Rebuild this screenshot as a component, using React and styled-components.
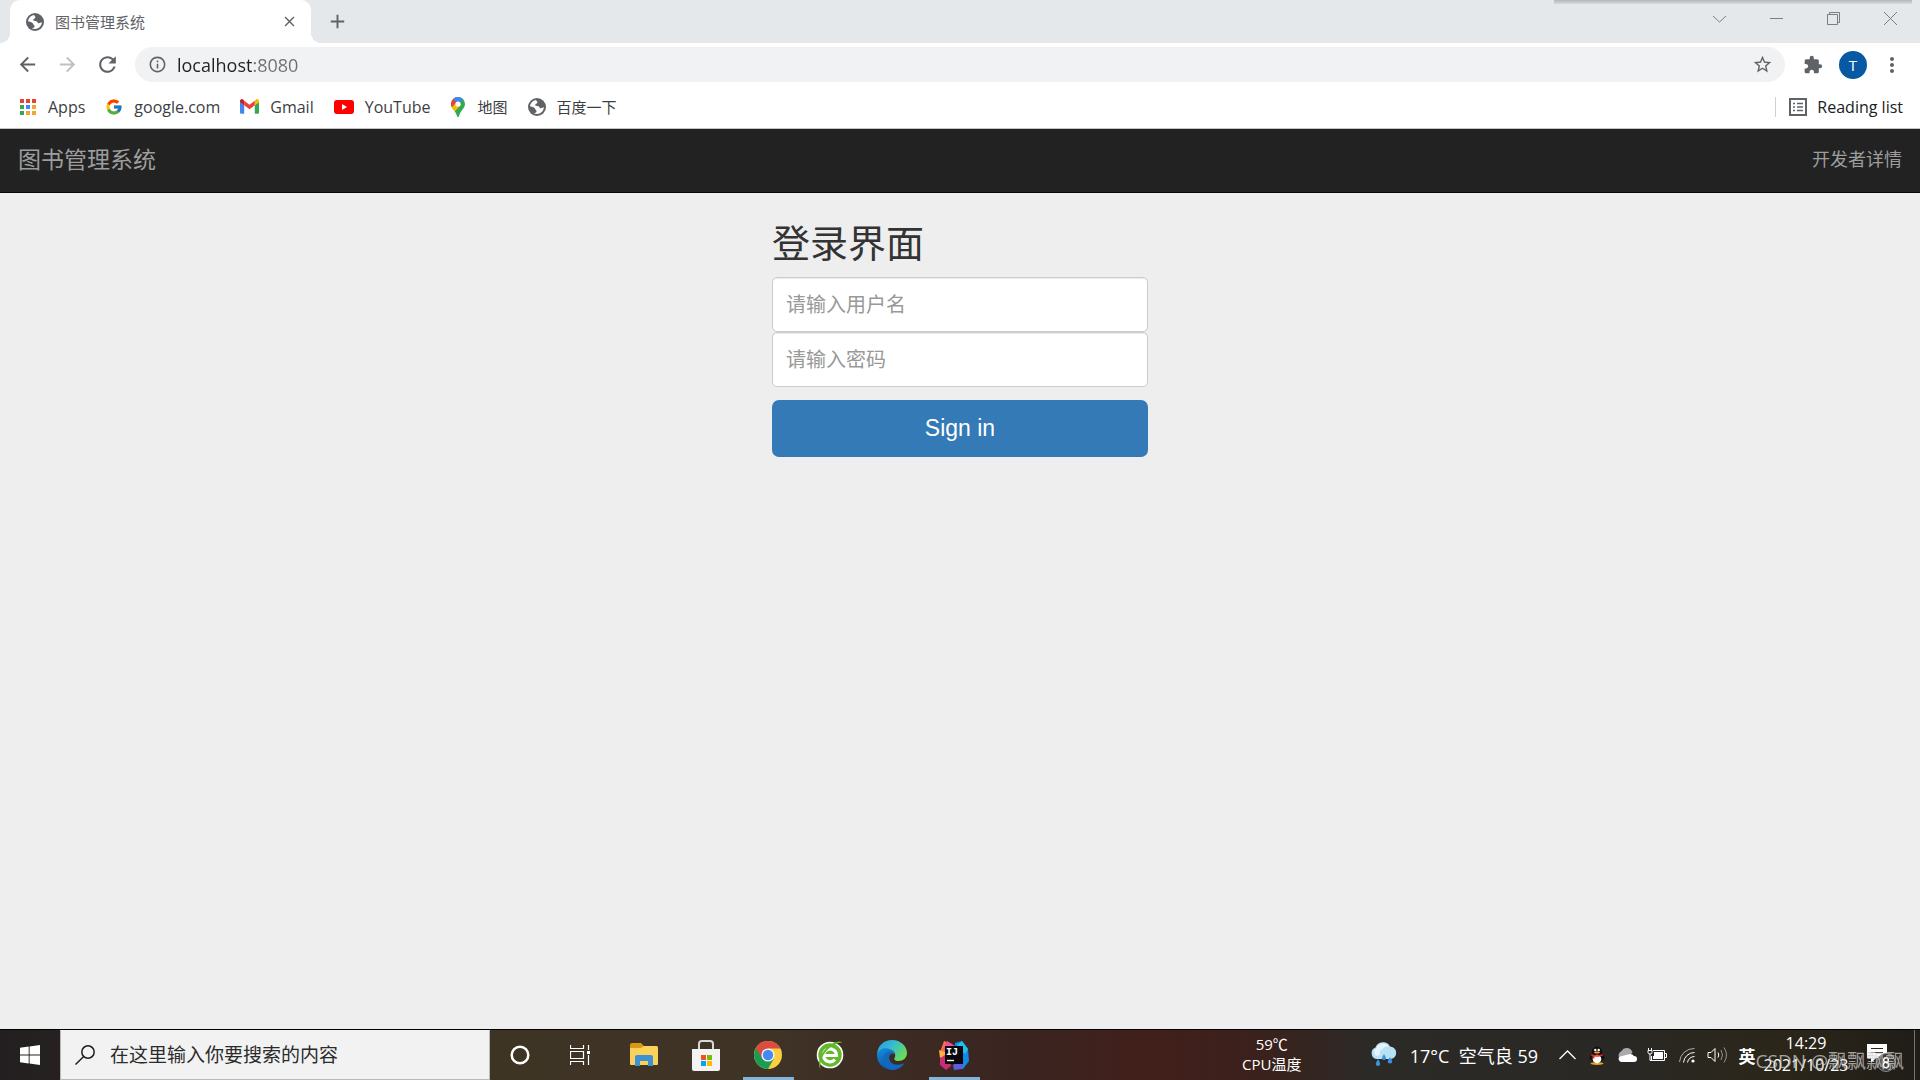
import React from "react"
import styled, { createGlobalStyle } from "styled-components"
import { MdArrowBack, MdArrowForward, MdRefresh, MdInfoOutline, MdStarBorder, MdExtension, MdMoreVert, MdClose, MdAdd } from 'react-icons/md';
import { FcGoogle } from 'react-icons/fc';


const GlobalStyle = createGlobalStyle`
	* {
		box-sizing: border-box;
	}

	body {
		margin: 0;
		background: #eeeeee;
		font-family: "Open Sans", "Noto Sans CJK SC", sans-serif;
	}

	button, input {
		font-family: inherit;
		margin: 0;
	}

	button {
		border: 0;
		padding: 0;
		background: none;
		cursor: pointer;
	}

	a {
		text-decoration: none;
	}

	svg {
		display: block;
		flex: none;
	}
`

const Screen = styled.div`
	display: flex;
	flex-direction: column;
	min-height: 100vh;
`

/* browser window */

const TabStrip = styled.div`
	position: relative;
	display: flex;
	align-items: stretch;
	height: 43px;
	padding-left: 10px;
	background: #e5e8eb;
`

const PopupShadow = styled.div`
	position: absolute;
	top: 0;
	right: 8px;
	width: 358px;
	height: 4px;
	background: linear-gradient(#b4b7b9, #d8dbde);
`

const Tab = styled.div`
	position: relative;
	display: flex;
	align-items: center;
	width: 301px;
	padding: 0 12px 0 16px;
	border-radius: 10px 10px 0 0;
	background: #fff;

	&::before, &::after {
		content: "";
		position: absolute;
		bottom: 0;
		width: 10px;
		height: 10px;
	}

	&::before {
		right: 100%;
		background: radial-gradient(circle at 0 0, transparent 10px, #fff 10px);
	}

	&::after {
		left: 100%;
		background: radial-gradient(circle at 100% 0, transparent 10px, #fff 10px);
	}
`

const TabTitle = styled.span`
	flex: 1;
	margin-left: 11px;
	font-size: 15px;
	line-height: 20px;
	color: #5f6368;
`

const IconButton = styled.button`
	display: flex;
	align-items: center;
	justify-content: center;
	width: ${p => p.$w || 40}px;
	height: ${p => p.$h || 40}px;
	color: ${p => p.$faded ? '#bdc0c4' : '#5f6368'};
`

const WindowButtons = styled.div`
	display: flex;
	margin-left: auto;
	padding-right: 1px;
`

const Toolbar = styled.div`
	display: flex;
	align-items: center;
	height: 43px;
	padding: 0 8px 0 7px;
	background: #fff;
`

const Omnibox = styled.div`
	flex: 1;
	display: flex;
	align-items: center;
	height: 35px;
	margin: 0 8px;
	padding: 0 12px 0 13px;
	border-radius: 18px;
	background: #f0f2f4;
	color: #5f6368;
`

/* the port is drawn lighter than the host */
const Address = styled.input`
	flex: 1;
	border: 0;
	outline: 0;
	padding: 0;
	margin-left: 10px;
	font-size: 18px;
	line-height: 24px;
	color: transparent;
	background: linear-gradient(90deg, #202124 77px, #6b6f74 77px);
	-webkit-background-clip: text;
	background-clip: text;
`

const Avatar = styled.button`
	width: 28px;
	height: 28px;
	margin: 0 5px 0 6px;
	border-radius: 50%;
	background: #0759a3;
	color: #fff;
	font-size: 15px;
	line-height: 28px;
`

const Bookmarks = styled.nav`
	display: flex;
	align-items: center;
	gap: 20px;
	height: 43px;
	padding: 0 17px 1px 19px;
	border-bottom: 1px solid #c4c4c4;
	background: #fff;
`

const Bookmark = styled.a`
	display: flex;
	align-items: center;
	gap: 11px;
	font-size: ${p => p.$cjk ? 15 : 16}px;
	line-height: 20px;
	color: #3c4043;
`

const ReadingList = styled.button`
	display: flex;
	align-items: center;
	gap: 10px;
	height: 20px;
	margin-left: auto;
	padding-left: 13px;
	border-left: 1px solid #cdd0d4;
	font-size: 16px;
	line-height: 20px;
	color: #202124;
`

/* login page */

const Navbar = styled.header`
	display: flex;
	align-items: center;
	justify-content: space-between;
	height: 64px;
	padding: 0 18px 3px;
	border-bottom: 1px solid #080808;
	background: #222;
`

const NavLink = styled.a`
	font-size: ${p => p.$brand ? 23 : 18}px;
	line-height: 28px;
	color: #9d9d9d;
`

const Page = styled.main`
	flex: 1;
	background: #eeeeee;
`

const LoginForm = styled.form`
	width: 376px;
	margin: 0 auto;
	padding-top: 28px;
`

const Heading = styled.h2`
	margin: 0 0 14px;
	font-size: 38px;
	line-height: 42px;
	font-weight: 400;
	color: #333;
`

const Field = styled.input`
	display: block;
	width: 100%;
	height: 55px;
	padding: 0 13px;
	border: 1px solid #ccc;
	border-radius: 5px;
	background: #fff;
	box-shadow: inset 0 1px 1px rgba(0, 0, 0, .08);
	font-size: 20px;

	&::placeholder {
		color: #999;
	}
`

const SignIn = styled.button`
	width: 100%;
	height: 57px;
	margin-top: 13px;
	border-radius: 7px;
	background: #337ab7;
	color: #fff;
	font-family: "Liberation Sans", Arial, sans-serif;
	font-size: 23px;
`

/* windows taskbar */

const Taskbar = styled.footer`
	position: relative;
	display: flex;
	height: 51px;
	border-top: 1px solid #000;
	background: linear-gradient(90deg, #231f20 0, #3e3424 26%, #3f3326 40%, #3a2420 53%, #421f1b 60%, #3a211c 66%, #2c2a27 71%, #2a2824 85%, #2b2619 93%, #201d19 100%);
	color: #fff;
`

const TaskButton = styled.button`
	display: flex;
	align-items: center;
	justify-content: center;
	width: ${p => p.$w || 62}px;
	color: #fff;
	background: ${p => p.$open ? 'linear-gradient(#83b4dc, #83b4dc) center bottom / 51px 3px no-repeat' : 'none'};
`

const SearchBox = styled.label`
	display: flex;
	align-items: center;
	gap: 15px;
	width: 430px;
	padding-left: 14px;
	border: 1px solid #b9b9b9;
	border-top-color: #f2f2f2;
	background: #f2f2f2;
`

const SearchInput = styled.input`
	flex: 1;
	min-width: 0;
	border: 0;
	padding: 0;
	outline: 0;
	background: none;
	font-size: 19px;

	&::placeholder {
		color: #2b2b2b;
	}
`

const Apps = styled.div`
	display: flex;
	padding-left: 3px;
`

const Readout = styled.div`
	display: flex;
	flex-direction: column;
	justify-content: center;
	width: ${p => p.$w}px;
	padding-bottom: 2px;
	text-align: center;
	font-size: ${p => p.$clock ? 16 : 15}px;
	line-height: ${p => p.$clock ? 22 : 20}px;
`

const SystemTray = styled.div`
	display: flex;
	margin-left: auto;
`

const Weather = styled.button`
	display: flex;
	align-items: center;
	gap: 13px;
	margin: 0 14px 0 63px;
	color: #fff;
	font-size: 18px;
	white-space: pre;
`

const Language = styled.span`
	font-size: 17px;
	font-weight: 700;
`

const ShowDesktop = styled.button`
	width: 6px;
	margin-left: 2px;
	border-left: 1px solid #77756d;
`

const Watermark = styled.div`
	position: absolute;
	right: 16px;
	bottom: 5px;
	font-size: 19px;
	line-height: 28px;
	color: rgba(205, 205, 205, .75);
	pointer-events: none;
`


function Globe(){
	return (
		<svg width="18" height="18" viewBox="0 0 18 18">
			<circle cx="9" cy="9" r="9" fill="#5f6368"/>
			<path d="M2 8.2C2.400 5 5 2.300 8.200 2 8 3.200 9.800 3.400 9.400 4.800 9.100 5.800 7.300 5.500 7.200 7c-.1 1 2.600.7 3.600 1.400C12 9.200 11.500 10.500 13 10.300c1-.1 1.600-.9 2.900-1C15.700 13 12.800 15.900 9 16c-1.200 0-2.300-.3-3.300-.8.900-.5 2.900-.3 2.900-1.700 0-1.100-1-1.500-1.400-2.500C6.700 9.500 4.600 8.600 2 8.200z" fill="#fff"/>
		</svg>
	)
}

function AppsGrid(){
	const dots = ['#e94335', '#e94335', '#e94335', '#34a853', '#4285f4', '#f0a72f', '#34a853', '#f0a72f', '#f0a72f']
	return (
		<svg width="18" height="18" viewBox="0 0 18 18">
			{dots.map((color, i) => (
				<rect key={i} x={1 + (i % 3) * 6} y={1 + Math.floor(i / 3) * 6} width="4" height="4" fill={color}/>
			))}
		</svg>
	)
}

function GmailIcon(){
	return (
		<svg width="19" height="15" viewBox="0 0 19 15">
			<path d="M0 3v10.500c0 .8.500 1.200 1.200 1.200h3V6z" fill="#4285f4"/>
			<path d="M19 3v10.500c0 .8-.5 1.200-1.200 1.200h-3V6z" fill="#34a853"/>
			<path d="M14.800 1.800V6.300L19 3.200V2c0-1.700-1.800-2.500-3-1.500z" fill="#fbbc04"/>
			<path d="M4.200 6.300V1.800l5.300 4 5.300-4v4.500l-5.300 4z" fill="#ea4335"/>
			<path d="M0 2v1.200l4.200 3.100V1.800L3 .5C1.800-.5 0 .3 0 2z" fill="#c5221f"/>
		</svg>
	)
}

function YoutubeIcon(){
	return (
		<svg width="20" height="14" viewBox="0 0 20 14">
			<rect width="20" height="14" rx="3" fill="#f00"/>
			<path d="M8 4v6l5-3z" fill="#fff"/>
		</svg>
	)
}

function MapPin(){
	return (
		<svg width="16" height="20" viewBox="0 0 16 20">
			<defs>
				<clipPath id="pin"><path d="M8 0a7 7 0 0 1 7 7c0 4.500-4.500 6.500-5.800 11.500C9 19.300 8.600 20 8 20s-1-.7-1.200-1.500C5.500 13.500 1 11.500 1 7a7 7 0 0 1 7-7z"/></clipPath>
			</defs>
			<g clipPath="url(#pin)">
				<path d="M0 0h16v20H0z" fill="#34a853"/>
				<path d="M0 0h6l2 7-4.500 5L0 8z" fill="#ea4335"/>
				<path d="M0 12L8 4l3 3.500L3.500 16z" fill="#fbbc04"/>
				<path d="M3 2L8 7l6.500-6L10-1H5z" fill="#4285f4"/>
			</g>
			<circle cx="8" cy="7" r="2.600" fill="#fff"/>
		</svg>
	)
}

function ReadingIcon(){
	return (
		<svg width="18" height="18" viewBox="0 0 18 18" fill="none" stroke="#5f6368">
			<rect x="1" y="1" width="16" height="16" strokeWidth="2"/>
			<path d="M4 5.500h2M4 9h2M4 12.500h2M8 5.500h6M8 9h6M8 12.500h6" strokeWidth="1.500"/>
		</svg>
	)
}

function WindowIcon({ d }){
	return (
		<svg width="15" height="15" viewBox="0 0 15 15" fill="none" stroke="#7b7e80">
			<path d={d}/>
		</svg>
	)
}

function WindowsLogo(){
	return (
		<svg width="20" height="20" viewBox="0 0 20 20" fill="#fff">
			<path d="M0 2.800L8.700 1.600V9.600H0zM9.600 1.500L20 0V9.600H9.600zM0 10.400H8.700V18.400L0 17.200zM9.600 10.400H20V20L9.600 18.500z"/>
		</svg>
	)
}

function SearchIcon(){
	return (
		<svg width="20" height="20" viewBox="0 0 20 20" fill="none" stroke="#1e1e1e" strokeWidth="1.500">
			<circle cx="13" cy="7" r="6.200"/>
			<path d="M8.700 11.500L.5 19.500"/>
		</svg>
	)
}

function CortanaIcon(){
	return (
		<svg width="20" height="20" viewBox="0 0 20 20" fill="none">
			<circle cx="10" cy="10" r="8.300" stroke="#fff" strokeWidth="2.500"/>
		</svg>
	)
}

function TaskViewIcon(){
	return (
		<svg width="21" height="20" viewBox="0 0 21 20" fill="none" stroke="#fff">
			<path d="M.5 0V3.500H13.500V0M.5 20V16.500H13.500V20M.5 6.500H13.500V13.500H.5zM18.500 0V5M18.500 10V20" strokeWidth="1.200"/>
			<rect x="17" y="6" width="3" height="3" fill="#fff" stroke="none"/>
		</svg>
	)
}

function ExplorerIcon(){
	return (
		<svg width="28" height="24" viewBox="0 0 28 24">
			<path d="M0 2q0-2 2-2h9l3 3h12q2 0 2 2v16H0z" fill="#d99a12"/>
			<path d="M0 5h11l3-2h12q2 0 2 2v16q0 1-1 1H1q-1 0-1-1z" fill="#fbd15b"/>
			<path d="M5 23V14q0-2 2-2h14q2 0 2 2v9h-5v-5h-8v5z" fill="#3b91d1"/>
		</svg>
	)
}

function StoreIcon(){
	return (
		<svg width="30" height="31" viewBox="0 0 30 31">
			<path d="M8 10V4q0-3 3-3h8q3 0 3 3v6" fill="none" stroke="#d8d8d8" strokeWidth="2"/>
			<path d="M1 9h28v20q0 2-2 2H3q-2 0-2-2z" fill="#f3f3f3"/>
			<path d="M10 15h5v5h-5z" fill="#f25022"/>
			<path d="M16 15h5v5h-5z" fill="#7fba00"/>
			<path d="M10 21h5v5h-5z" fill="#00a4ef"/>
			<path d="M16 21h5v5h-5z" fill="#ffb900"/>
		</svg>
	)
}

function ChromeIcon(){
	return (
		<svg width="28" height="28" viewBox="0 0 28 28">
			<circle cx="14" cy="14" r="14" fill="#ffcd40"/>
			<path d="M14 14L1.900 7A14 14 0 0 0 14 28l6-10.500z" fill="#1a9c53"/>
			<path d="M14 7.500H26.400A14 14 0 0 0 1.900 7L8.300 17.500z" fill="#dd4b3e"/>
			<circle cx="14" cy="14" r="6.600" fill="#f4f4f4"/>
			<circle cx="14" cy="14" r="5.200" fill="#4688f1"/>
		</svg>
	)
}

function Browser360Icon(){
	return (
		<svg width="28" height="30" viewBox="0 0 28 30">
			<circle cx="14" cy="15" r="12.500" fill="#62b82a" stroke="#fff" strokeWidth="1.600"/>
			<path d="M8 15.500H20.500A6.500 6.500 0 1 0 19 19.500" fill="none" stroke="#fff" strokeWidth="3.200"/>
			<path d="M4.500 29C1.500 25 3 17 8.500 10 14 3 24-1 26.500 3 23 1.500 15 5 9.500 12 5.500 17 3.500 24 4.500 29z" fill="#62b82a"/>
		</svg>
	)
}

function EdgeIcon(){
	return (
		<svg width="30" height="30" viewBox="0 0 30 30">
			<defs>
				<linearGradient id="edgeTop" x1="0" y1="0" x2="1" y2="0.600">
					<stop offset="0" stopColor="#2797dd"/>
					<stop offset=".5" stopColor="#36bdcf"/>
					<stop offset="1" stopColor="#6bdc55"/>
				</linearGradient>
				<linearGradient id="edgeSide" x1="0" y1="0" x2="0.600" y2="1">
					<stop offset="0" stopColor="#168ee0"/>
					<stop offset="1" stopColor="#0b4f9c"/>
				</linearGradient>
			</defs>
			<path d="M0 14C1 5 7 0 15 0c9 0 15 6.500 15 13 0 5-4 8-8.500 8-3.500 0-5-1.500-4-3 2-3 0-8-5-8C7 9.500 1 12 0 14z" fill="url(#edgeTop)"/>
			<path d="M0 14c2-5 7-6.500 11-5.500 5 1 6.500 4 6 6-2-2-5-.5-5 3C12 23 18 27 27 23.500 24.500 27.500 20 30 15 30 6 30-.5 22.500 0 14z" fill="url(#edgeSide)"/>
			<path d="M10 12c-7 5-4 16 5 18 5 0 9.500-2.500 12-6.500C18 27 12 23 12 17.500c0-1.500.5-2.500 1.500-3.300C15 13 14 11 10 12z" fill="#1368bd"/>
		</svg>
	)
}

const IdeaText = styled.text`
	font: bold 10px "Liberation Mono", monospace;
	fill: #fff;
`

function IdeaIcon(){
	return (
		<svg width="30" height="30" viewBox="0 0 30 30">
			<path d="M1 12L5 1l8 3-3 22-7-4z" fill="#fb7043"/>
			<path d="M8 1l8 5-8 8-4-5z" fill="#f54b91"/>
			<path d="M1 18l8-4 3 12-5 4-6-5z" fill="#c92d76"/>
			<path d="M0 10l8 3-7 5z" fill="#ffb13d"/>
			<path d="M16 3l7-2 6 8 1 12-6 8-9-3z" fill="#128ae5"/>
			<path d="M23 1l6 8-3 5-8-9z" fill="#21bfee"/>
			<path d="M14 25l11-5-2 9-8 1z" fill="#5d5ce3"/>
			<rect x="6" y="6" width="18" height="18" fill="#08080c"/>
			<IdeaText x="7" y="15">IJ</IdeaText>
			<path d="M8 20.500h7" stroke="#fff" strokeWidth="1.400"/>
		</svg>
	)
}

function RainIcon(){
	return (
		<svg width="27" height="26" viewBox="0 0 27 26">
			<path d="M6.500 17a6 6 0 0 1-1-11.500A8 8 0 0 1 20 4.500a6.300 6.300 0 0 1 1 12.500z" fill="#b9e1f6"/>
			<path d="M6.500 14a4.500 4.500 0 0 1 0-8A7 7 0 0 1 19 5c-3-1-5 0-6 2-3 0-4 3-3 6z" fill="#e3f5fc"/>
			<path d="M14 12q4 6 0 6t0-6zM8 17q4.500 7 0 7t0-7zM20 15q4.500 6.500 0 6.500t0-6.500z" fill="#3f90de"/>
		</svg>
	)
}

function QQIcon(){
	return (
		<svg width="16" height="19" viewBox="0 0 16 19">
			<ellipse cx="8" cy="17.500" rx="6.500" ry="1.500" fill="#f0a020"/>
			<path d="M3 6a5 5.500 0 0 1 10 0c0 2 3 4 2.500 7-.5 1.500-1.500 0-1.500 0-1 5-11 5-12 0 0 0-1 1.500-1.500 0C0 10 3 8 3 6z" fill="#111"/>
			<ellipse cx="8" cy="13" rx="4.300" ry="4.300" fill="#fff"/>
			<path d="M2.500 8q5.500 2.500 11 0l.5 1.500q-6 2.500-12 0z" fill="#e22a2f"/>
			<path d="M3.500 9.500h2v3h-2z" fill="#e22a2f"/>
			<circle cx="6.300" cy="4" r="1.200" fill="#fff"/>
			<circle cx="9.700" cy="4" r="1.200" fill="#fff"/>
			<ellipse cx="8" cy="6.500" rx="3" ry="1" fill="#f5a623"/>
		</svg>
	)
}

function CloudIcon(){
	return (
		<svg width="20" height="14" viewBox="0 0 20 14">
			<path d="M3 11A5 5 0 0 1 4.500 3a6 6 0 0 1 11 1.500L8 12z" fill="#a9a9a9"/>
			<path d="M4 14a3 3 0 0 1-1-5.500L11 6.500a5 5 0 0 1 6 1.500 3 3 0 0 1 0 6z" fill="#fff"/>
		</svg>
	)
}

function BatteryIcon(){
	return (
		<svg width="20" height="14" viewBox="0 0 20 14" fill="none" stroke="#fff">
			<path d="M6 2.500H17.500V12.500H4.500V8M17.500 5.500H19.500V9.500H17.500"/>
			<path d="M7 4h9v7H6V8h1z" fill="#fff" stroke="none"/>
			<path d="M1 2.500H5V4.500Q5 6 3 6T1 4.500zM1.500 0V2M4.500 0V2M3 6V12.500H5"/>
		</svg>
	)
}

function WifiIcon(){
	return (
		<svg width="16" height="16" viewBox="0 0 16 16" fill="none" stroke="#fff">
			<path d="M.5 15A14.500 14.500 0 0 1 15.500 1.500" opacity=".6"/>
			<path d="M4.500 15.500A11 11 0 0 1 15.500 5.500M8.500 15.500A7 7 0 0 1 15.500 9.500"/>
			<circle cx="14" cy="14" r="1.600" fill="#fff" stroke="none"/>
		</svg>
	)
}

function SpeakerIcon(){
	return (
		<svg width="21" height="18" viewBox="0 0 21 18" fill="none" stroke="#fff">
			<path d="M1 6.500H4L8 2.500V15.500L4 11.500H1z"/>
			<path d="M11 6.500Q12.500 9 11 11.500"/>
			<path d="M14 4Q17 9 14 14M17 1.500Q22 9 17 16.500" opacity=".5"/>
		</svg>
	)
}

function NotificationIcon(){
	return (
		<svg width="30" height="34" viewBox="0 0 30 34">
			<path d="M1 6H21V20H10L5 25V20H1z" fill="#fff"/>
			<path d="M5 10.500H17M5 14.500H17" stroke="#2b2619"/>
			<circle cx="20" cy="24.500" r="9" fill="#3b3a36" stroke="#8b8a85"/>
			<circle cx="20" cy="22" r="2.300" fill="none" stroke="#fff" strokeWidth="1.500"/>
			<circle cx="20" cy="27" r="2.700" fill="none" stroke="#fff" strokeWidth="1.500"/>
		</svg>
	)
}


function Browser(){
	return (
		<div>
			<TabStrip>
				<PopupShadow/>
				<Tab>
					<Globe/>
					<TabTitle>图书管理系统</TabTitle>
					<IconButton $w={20} aria-label="Close tab"><MdClose size={17}/></IconButton>
				</Tab>
				<IconButton $w={52} $h={43} aria-label="New tab"><MdAdd size={23}/></IconButton>
				<WindowButtons>
					<IconButton $w={57} $h={37} aria-label="Search tabs"><WindowIcon d="M1 5L7.500 11L14 5"/></IconButton>
					<IconButton $w={57} $h={37} aria-label="Minimize"><WindowIcon d="M1 7.500H14"/></IconButton>
					<IconButton $w={57} $h={37} aria-label="Restore"><WindowIcon d="M1.500 3.500H11.500V13.500H1.500zM3.500 3V1.500H13.500V11.500H12"/></IconButton>
					<IconButton $w={57} $h={37} aria-label="Close"><WindowIcon d="M1 1L14 14M14 1L1 14"/></IconButton>
				</WindowButtons>
			</TabStrip>
			<Toolbar>
				<IconButton aria-label="Back"><MdArrowBack size={23}/></IconButton>
				<IconButton $faded aria-label="Forward"><MdArrowForward size={23}/></IconButton>
				<IconButton aria-label="Reload"><MdRefresh size={25}/></IconButton>
				<Omnibox>
					<MdInfoOutline size={19}/>
					<Address aria-label="Address" defaultValue="localhost:8080"/>
					<MdStarBorder size={21}/>
				</Omnibox>
				<IconButton aria-label="Extensions"><MdExtension size={20}/></IconButton>
				<Avatar>T</Avatar>
				<IconButton aria-label="Menu"><MdMoreVert size={24}/></IconButton>
			</Toolbar>
			<Bookmarks>
				<Bookmark href="#"><AppsGrid/>Apps</Bookmark>
				<Bookmark href="#"><FcGoogle size={18}/>google.com</Bookmark>
				<Bookmark href="#"><GmailIcon/>Gmail</Bookmark>
				<Bookmark href="#"><YoutubeIcon/>YouTube</Bookmark>
				<Bookmark href="#" $cjk><MapPin/>地图</Bookmark>
				<Bookmark href="#" $cjk><Globe/>百度一下</Bookmark>
				<ReadingList><ReadingIcon/>Reading list</ReadingList>
			</Bookmarks>
		</div>
	)
}

function Login(){
	return (
		<Page>
			<Navbar>
				<NavLink href="#" $brand>图书管理系统</NavLink>
				<NavLink href="#">开发者详情</NavLink>
			</Navbar>
			<LoginForm onSubmit={e => e.preventDefault()}>
				<Heading>登录界面</Heading>
				<Field type="text" aria-label="请输入用户名" placeholder="请输入用户名"/>
				<Field type="password" aria-label="请输入密码" placeholder="请输入密码"/>
				<SignIn type="submit">Sign in</SignIn>
			</LoginForm>
		</Page>
	)
}

function WindowsTaskbar(){
	return (
		<Taskbar>
			<TaskButton $w={60} aria-label="Start"><WindowsLogo/></TaskButton>
			<SearchBox>
				<SearchIcon/>
				<SearchInput aria-label="在这里输入你要搜索的内容" placeholder="在这里输入你要搜索的内容"/>
			</SearchBox>
			<TaskButton $w={60} aria-label="Cortana"><CortanaIcon/></TaskButton>
			<TaskButton $w={60} aria-label="Task view"><TaskViewIcon/></TaskButton>
			<Apps>
				<TaskButton aria-label="Explorer"><ExplorerIcon/></TaskButton>
				<TaskButton aria-label="Store"><StoreIcon/></TaskButton>
				<TaskButton $open aria-label="Chrome"><ChromeIcon/></TaskButton>
				<TaskButton aria-label="360"><Browser360Icon/></TaskButton>
				<TaskButton aria-label="Edge"><EdgeIcon/></TaskButton>
				<TaskButton $open aria-label="IntelliJ IDEA"><IdeaIcon/></TaskButton>
			</Apps>
			<SystemTray>
				<Readout $w={70}>
					<span>59℃</span>
					<span>CPU温度</span>
				</Readout>
				<Weather><RainIcon/>17°C  空气良 59</Weather>
				<TaskButton $w={30} aria-label="Hidden icons">
					<svg width="17" height="10" viewBox="0 0 17 10" fill="none" stroke="#fff"><path d="M.5 9L8.500 1L16.500 9" strokeWidth="1.300"/></svg>
				</TaskButton>
				<TaskButton $w={30} aria-label="QQ"><QQIcon/></TaskButton>
				<TaskButton $w={30} aria-label="OneDrive"><CloudIcon/></TaskButton>
				<TaskButton $w={30} aria-label="Battery"><BatteryIcon/></TaskButton>
				<TaskButton $w={30} aria-label="Network"><WifiIcon/></TaskButton>
				<TaskButton $w={30} aria-label="Volume"><SpeakerIcon/></TaskButton>
				<TaskButton $w={30}><Language>英</Language></TaskButton>
				<Readout $w={88} $clock>
					<span>14:29</span>
					<span>2021/10/23</span>
				</Readout>
				<TaskButton $w={62} aria-label="Notifications"><NotificationIcon/></TaskButton>
				<ShowDesktop aria-label="Show desktop"/>
			</SystemTray>
			<Watermark>CSDN @飘飘飘飘</Watermark>
		</Taskbar>
	)
}

function App(){
	return (
		<Screen>
			<GlobalStyle/>
			<Browser/>
			<Login/>
			<WindowsTaskbar/>
		</Screen>
	)
}

export default App
